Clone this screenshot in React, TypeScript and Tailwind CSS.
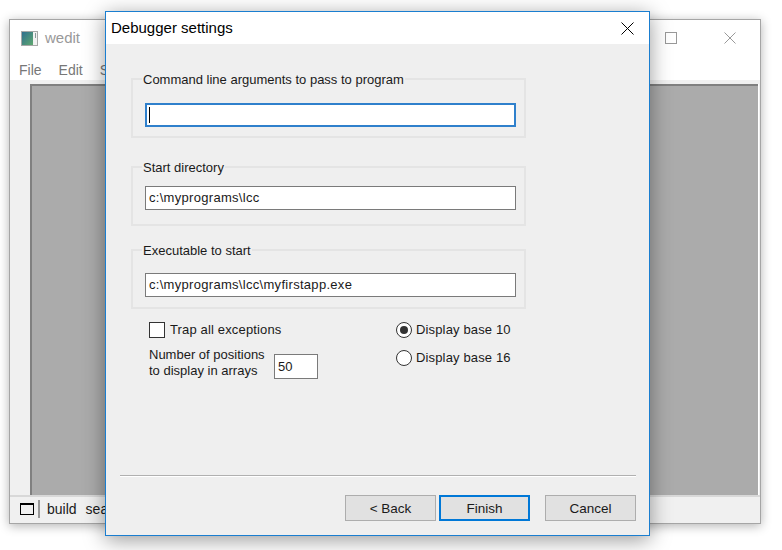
import React from 'react';

const ui = { fontFamily: '"Liberation Sans", Arial, sans-serif' };

const inputClass =
  'block h-[24px] w-[371px] border border-[#7a7a7a] bg-white pl-[3px] text-[13px] leading-[22px] tracking-[0.3px] text-[#1a1a1a] outline-none';

interface GroupBoxProps {
  label: string;
  value: string;
  focused?: boolean;
  inputTop: string;
}

const GroupBox: React.FC<GroupBoxProps> = ({ label, value, focused, inputTop }) => (
  <fieldset className="h-[67px] w-[395px] border-2 border-[#e4e4e4]">
    <legend className="ml-[9px] h-[16px] px-[1px] text-[13px] leading-[18px] text-[#1a1a1a]">{label}</legend>
    <div className={`pl-[12px] ${inputTop}`}>
      {focused ? (
        <div className="flex h-[24px] w-[371px] items-center border-2 border-[#2f80cc] bg-white pl-[2px]">
          <div className="h-[16px] w-px bg-black" />
        </div>
      ) : (
        <div className={inputClass}>{value}</div>
      )}
    </div>
  </fieldset>
);

const WizardButton: React.FC<{ label: string; primary?: boolean }> = ({ label, primary }) => (
  <button
    className={`h-[26px] w-[91px] bg-[#e1e1e1] pt-[2px] text-[13.5px] text-[#1a1a1a] ${
      primary ? 'border-2 border-[#0078d7]' : 'border border-[#adadad]'
    }`}
  >
    {label}
  </button>
);

const BackWindow = () => (
  <div className="absolute left-[9px] top-[19px] flex h-[505px] w-[752px] flex-col border border-[#a5a5a5] bg-white shadow-[0_2px_10px_rgba(0,0,0,0.3)]">
    <div className="flex h-[36px] shrink-0 items-center pl-[11px]">
      <svg width="17" height="15" viewBox="0 0 17 15">
        <defs>
          <linearGradient id="wedit-icon" x1="0" y1="0" x2="1" y2="1">
            <stop offset="0" stopColor="#2f6f8f" />
            <stop offset="1" stopColor="#5fa86f" />
          </linearGradient>
        </defs>
        <rect x="0.5" y="0.5" width="16" height="14" fill="#f2f2f2" stroke="#a8a8a8" />
        <rect x="1" y="1" width="11" height="13" fill="url(#wedit-icon)" />
        <rect x="14" y="2" width="1" height="5" fill="#8a9a9a" />
      </svg>
      <span className="ml-[7px] text-[15px] text-[#999999]">wedit</span>
      <div className="ml-auto mr-[24px] flex items-center gap-[47px]">
        <div className="h-[12px] w-[12px] border border-[#999999]" />
        <svg width="12" height="12" viewBox="0 0 12 12">
          <path d="M0.5 0.5 L11.5 11.5 M11.5 0.5 L0.5 11.5" stroke="#999999" fill="none" />
        </svg>
      </div>
    </div>
    <div className="flex h-[24px] shrink-0 items-center gap-[17px] pl-[9px] pt-[4px] text-[14px] text-[#777777]">
      <span>File</span>
      <span>Edit</span>
      <span>Search</span>
    </div>
    <div className="flex min-h-0 flex-1 bg-[#f0f0f0] pl-[20px] pr-[1px] pt-[4px]">
      <div className="flex-1 border-l-2 border-t-2 border-[#808080] bg-[#ababab]" />
      <div className="w-[1px] bg-white" />
    </div>
    <div className="flex h-[28px] shrink-0 items-center border-t-2 border-[#d8d8d8] bg-[#f0f0f0] pb-[2px] pl-[10px] text-[14px] text-[#1a1a1a]">
      <div className="h-[12px] w-[14px] border border-t-2 border-black" />
      <div className="ml-[4px] h-[18px] w-[2px] bg-[#999999]" />
      <span className="ml-[7px]">build</span>
      <span className="ml-[9px]">search</span>
    </div>
  </div>
);

const Dialog = () => (
  <div className="absolute left-[105px] top-[11px] flex h-[525px] w-[545px] flex-col border border-[#1a7ed0] bg-[#efefef] shadow-[0_4px_20px_rgba(0,0,0,0.4)]">
    <div className="flex h-[32px] shrink-0 items-center justify-between bg-white pl-[5px] pr-[15px]">
      <span className="text-[15px] text-black">Debugger settings</span>
      <svg width="13" height="13" viewBox="0 0 13 13">
        <path d="M0.5 0.5 L12.5 12.5 M12.5 0.5 L0.5 12.5" stroke="#000000" fill="none" />
      </svg>
    </div>
    <div className="flex flex-1 flex-col pl-[25px] pt-[27px]">
      <GroupBox label="Command line arguments to pass to program" value="" focused inputTop="pt-[16px]" />
      <div className="mt-[21px]">
        <GroupBox label="Start directory" value="c:\myprograms\lcc" inputTop="pt-[11px]" />
      </div>
      <div className="mt-[16px]">
        <GroupBox label="Executable to start" value="c:\myprograms\lcc\myfirstapp.exe" inputTop="pt-[15px]" />
      </div>
      <div className="mt-[13px] flex pl-[18px] text-[13px] leading-[16px] text-[#1a1a1a]">
        <div className="w-[247px]">
          <div className="flex items-center gap-[5px]">
            <div className="h-[16px] w-[16px] border border-[#333333] bg-white" />
            <span className="tracking-[0.15px]">Trap all exceptions</span>
          </div>
          <div className="mt-[9px] flex items-start gap-[8px]">
            <span className="w-[117px] whitespace-nowrap">
              Number of positions
              <br />
              to display in arrays
            </span>
            <div className="mt-[7px] h-[25px] w-[44px] border border-[#7a7a7a] bg-white pl-[3px] leading-[23px]">50</div>
          </div>
        </div>
        <div className="flex flex-col gap-[12px]">
          <div className="flex items-center gap-[4px]">
            <div className="flex h-[16px] w-[16px] items-center justify-center rounded-full border border-[#333333] bg-white">
              <div className="h-[8px] w-[8px] rounded-full bg-[#333333]" />
            </div>
            <span className="tracking-[0.15px]">Display base 10</span>
          </div>
          <div className="flex items-center gap-[4px]">
            <div className="h-[16px] w-[16px] rounded-full border border-[#333333] bg-white" />
            <span className="tracking-[0.15px]">Display base 16</span>
          </div>
        </div>
      </div>
      <div className="mt-auto mb-[14px] ml-[-11px] w-[516px]">
        <div className="h-[2px] border-t border-b border-t-[#b0b0b0] border-b-white" />
        <div className="mt-[18px] flex pl-[225px]">
          <WizardButton label="< Back" />
          <div className="ml-[3px]">
            <WizardButton label="Finish" primary />
          </div>
          <div className="ml-[15px]">
            <WizardButton label="Cancel" />
          </div>
        </div>
      </div>
    </div>
  </div>
);

export default function App() {
  return (
    <div className="relative h-[550px] w-[782px] overflow-hidden bg-white" style={ui}>
      <BackWindow />
      <Dialog />
    </div>
  );
}
